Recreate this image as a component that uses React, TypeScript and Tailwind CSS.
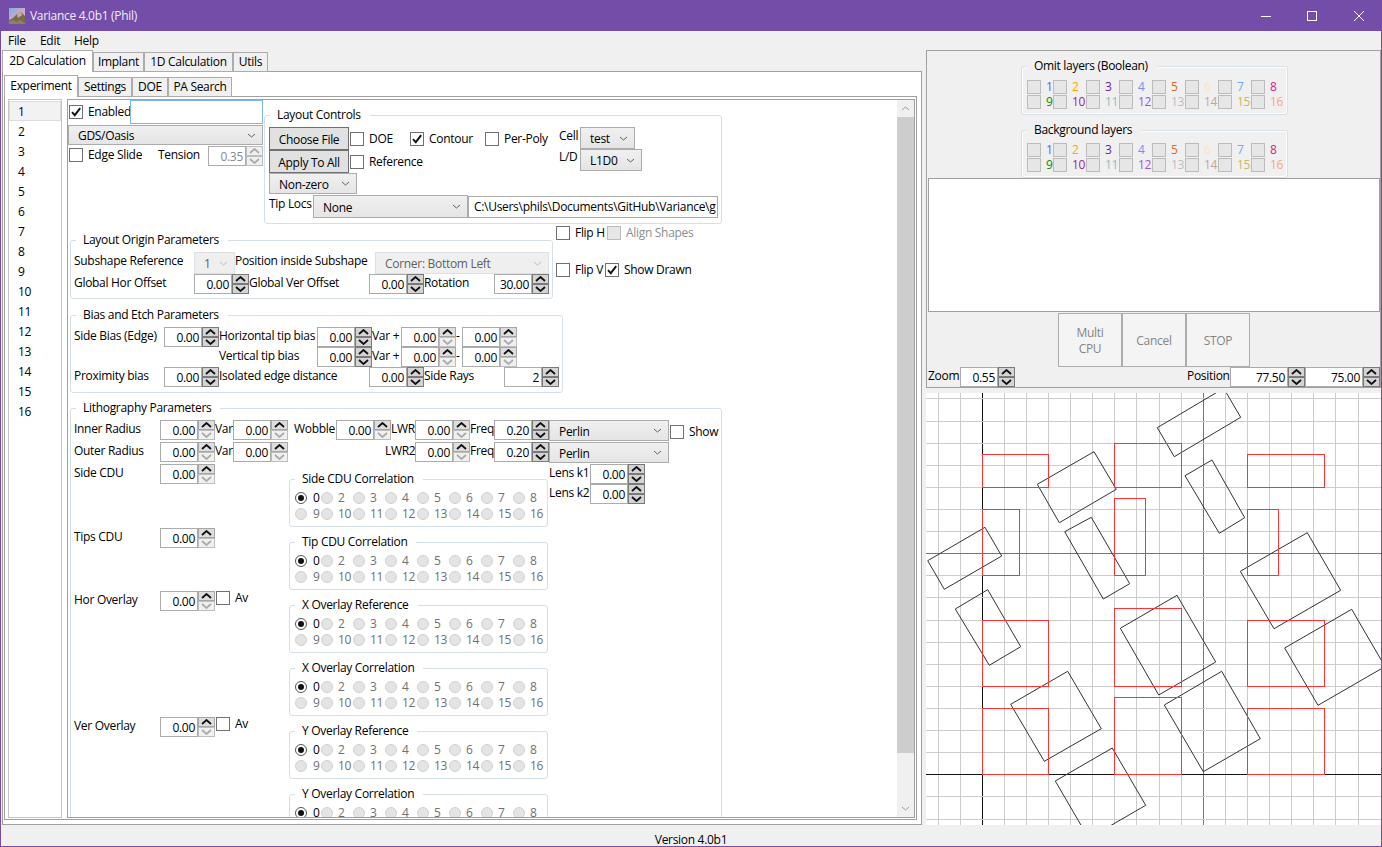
import React from "react";

type Mode = "on" | "half" | "off";

function Arrow({ up, on, strong }: { up?: boolean; on: boolean; strong: boolean }) {
  return (
    <div className={`flex-1 flex items-center justify-center border ${on ? (strong ? "bg-[#d4d4d4] border-[#7a7a7a]" : "bg-[#dedede] border-[#a6a6a6]") : "bg-[#f0f0f0] border-[#bdbdbd]"}`}>
      <svg width="11" height="6" viewBox="0 0 11 6">
        <path d={up ? "M1 5 L5.5 1 L10 5" : "M1 1 L5.5 5 L10 1"} fill="none" stroke={on ? "#111" : "#ababab"} strokeWidth="1.8" />
      </svg>
    </div>
  );
}

function Spin({ v, w = "w-[55px]", mode = "on" }: { v: string; w?: string; mode?: Mode }) {
  return (
    <div className={`flex h-[20px] shrink-0 ${w}`}>
      <div className={`flex-1 min-w-0 bg-white border border-[#ababab] flex items-center justify-end pr-[2px] pt-[2px] ${mode === "off" ? "text-[#8a8a8a]" : "text-black"}`}>{v}</div>
      <div className="w-[17px] flex flex-col">
        <Arrow up on={mode !== "off"} strong={mode === "on"} />
        <Arrow on={mode === "on"} strong={mode === "on"} />
      </div>
    </div>
  );
}

function Chevron({ pale }: { pale?: boolean }) {
  return (
    <svg width="9" height="5" viewBox="0 0 9 5" className="shrink-0">
      <path d="M1 1 L4.5 4 L8 1" fill="none" stroke={pale ? "#bdbdbd" : "#606060"} strokeWidth="1" />
    </svg>
  );
}

function Drop({ t, w, h = "h-[20px]", off }: { t: string; w: string; h?: string; off?: boolean }) {
  return (
    <div className={`flex items-center justify-between shrink-0 pl-[9px] pr-[6px] border ${w} ${h} ${off ? "bg-[#efefef] border-[#e0e0e0] text-[#5f5f5f]" : "bg-gradient-to-b from-[#f0f0f0] to-[#e5e5e5] border-[#acacac]"}`}>
      <span className="pt-[2px]">{t}</span>
      <Chevron pale={off} />
    </div>
  );
}

function Box({ checked, off }: { checked?: boolean; off?: boolean }) {
  return (
    <div className={`w-[14px] h-[14px] shrink-0 border flex items-center justify-center ${off ? "bg-[#e6e6e6] border-[#bcbcbc]" : "bg-white border-[#707070]"}`}>
      {checked && (
        <svg width="12" height="12" viewBox="0 0 12 12">
          <path d="M2 6.2 L4.8 9.2 L10.2 2.2" fill="none" stroke="#111" strokeWidth="1.9" />
        </svg>
      )}
    </div>
  );
}

function Check({ t, w, checked, off, cls = "" }: { t: string; w?: string; checked?: boolean; off?: boolean; cls?: string }) {
  return (
    <div className={`flex items-center shrink-0 ${w ?? ""} ${cls}`}>
      <Box checked={checked} off={off} />
      <span className={`ml-[5px] whitespace-nowrap ${off ? "text-[#8c8c8c]" : ""}`}>{t}</span>
    </div>
  );
}

function L({ t, w, cls = "" }: { t: string; w: string; cls?: string }) {
  return <div className={`shrink-0 pt-[1px] leading-[16px] whitespace-nowrap ${w} ${cls}`}>{t}</div>;
}

function Group({ title, cls, bg = "bg-white", children }: { title: string; cls: string; bg?: string; children: React.ReactNode }) {
  return (
    <div className={`relative shrink-0 border border-[#d5dfe5] rounded-[3px] ${cls}`}>
      <div className={`absolute -top-[9px] left-[5px] h-[16px] leading-[16px] pl-[7px] pr-[9px] whitespace-nowrap ${bg}`}>{title}</div>
      {children}
    </div>
  );
}

function Radio({ sel }: { sel?: boolean }) {
  return sel ? (
    <div className="w-[12px] h-[12px] rounded-full bg-white border border-[#555] flex items-center justify-center shrink-0">
      <div className="w-[6px] h-[6px] rounded-full bg-[#111]" />
    </div>
  ) : (
    <div className="w-[12px] h-[12px] rounded-full bg-[#e4e4e4] border border-[#d0d0d0] shrink-0" />
  );
}

const nums = Array.from({ length: 16 }, (_, i) => i + 1);

function RadioGroup({ title }: { title: string }) {
  return (
    <Group title={title} cls="w-[259px] h-[48px] mb-[15px] pl-[5px] pt-[10px]">
      <div className="grid grid-cols-[26px_repeat(7,32px)] auto-rows-[16px]">
        {nums.map((n, i) => (
          <div key={n} className="flex items-center">
            <Radio sel={i === 0} />
            <span className={`${i % 8 === 0 ? "ml-[6px]" : "ml-[5px]"} ${i === 0 ? "text-black" : "text-[#707070]"}`}>{i === 0 ? "0" : n}</span>
          </div>
        ))}
      </div>
    </Group>
  );
}

const layerColors = [
  "text-[#5a5aff]", "text-[#ffa500]", "text-[#6a1b9a]", "text-[#7b8cf5]", "text-[#e0691e]", "text-[#ffe4b5]", "text-[#6fa8f5]", "text-[#d81b8a]",
  "text-[#0a8a0a]", "text-[#a020a0]", "text-[#8fb8c8]", "text-[#a050f0]", "text-[#bdbdbd]", "text-[#c8a0a0]", "text-[#c8b860]", "text-[#f8a878]",
];

function LayerGrid() {
  return (
    <div className="grid grid-cols-[26px_repeat(7,33px)] auto-rows-[15px]">
      {nums.map((n, i) => (
        <div key={n} className="flex items-start">
          <Box off />
          <span className={`ml-[5px] -mt-px ${layerColors[i]}`}>{n}</span>
        </div>
      ))}
    </div>
  );
}

function Tab({ t, w, active }: { t: string; w: string; active?: boolean }) {
  return (
    <div className={`flex justify-center shrink-0 border-x border-t border-[#acacac] ${w} ${active ? "h-[22px] bg-white pt-[2px] text-black relative z-10" : "h-[20px] bg-[#f0f0f0] pt-[1px] border-b"}`}>
      {t}
    </div>
  );
}

const gx = [938, 960, 982, 1004, 1026, 1048, 1070, 1092, 1114, 1136, 1159, 1181, 1203, 1225, 1247, 1269, 1291, 1313, 1335, 1358];
const gy = [398, 421, 443, 465, 487, 509, 531, 553, 575, 597, 620, 642, 664, 686, 708, 730, 752, 774, 796, 819];
const reds: number[][] = [
  [982, 454, 1048, 487], [1114, 443, 1181, 487], [1247, 454, 1324, 487],
  [982, 509, 1019, 575], [1114, 498, 1145, 575], [1247, 509, 1278, 575],
  [982, 620, 1048, 686], [1114, 608, 1181, 686], [1247, 620, 1324, 686],
  [982, 708, 1048, 774], [1114, 697, 1181, 774], [1247, 708, 1324, 774],
];
const polys = [
  "1157.3,427.7 1174.3,456.7 1240.7,417.3 1223.7,388.3",
  "1037.3,484.3 1059.3,522.7 1116.3,489.3 1094,451.7",
  "1185,475.7 1212,460 1244.7,517.7 1219.3,533.3",
  "1064.7,531.7 1091.3,517.3 1129.7,583.7 1103.3,599",
  "927.7,560.7 944.3,589.3 1001.7,556 985,527.3",
  "955.3,609 987.7,589.7 1020.7,646.7 989.3,665.3",
  "1240.3,571.3 1307.3,532.7 1340.7,590.3 1274,628.7",
  "1120.3,628.3 1177,595.3 1215.7,662 1158.7,695",
  "1284.7,648 1351.7,609.3 1385,666.6 1318,705.3",
  "1010.7,704.3 1067.7,671.3 1101.3,728.7 1044.3,761.3",
  "1164.3,705 1221.7,671.3 1260.3,738.7 1203.3,771.7",
  "1055.3,781 1112.3,748 1145.7,805.3 1088.7,838.3",
];

function Canvas() {
  return (
    <svg width="455" height="432" viewBox="926 393 455 432" className="block bg-white">
      {gx.map((x) => (
        <line key={x} x1={x + 0.5} x2={x + 0.5} y1="393" y2="825" stroke={x === 982 ? "#111" : x === 1203 ? "#6f7780" : "#cccccc"} />
      ))}
      {gy.map((y) => (
        <line key={y} y1={y + 0.5} y2={y + 0.5} x1="926" x2="1382" stroke={y === 774 ? "#111" : y === 553 ? "#6f7780" : "#cccccc"} />
      ))}
      {polys.map((p) => (
        <polygon key={p} points={p} fill="none" stroke="#333" strokeWidth="1" />
      ))}
      {reds.map((r) => (
        <rect key={r.join()} x={r[0] + 0.5} y={r[1] + 0.5} width={r[2] - r[0]} height={r[3] - r[1]} fill="none" stroke="#ff3333" />
      ))}
    </svg>
  );
}

function TitleIcon() {
  return (
    <svg width="16" height="16" viewBox="0 0 16 16" className="shrink-0">
      <defs>
        <linearGradient id="sky" x1="0" y1="0" x2="1" y2="1">
          <stop offset="0" stopColor="#7fb0d8" />
          <stop offset="0.6" stopColor="#d8a8c8" />
          <stop offset="1" stopColor="#e8c8c0" />
        </linearGradient>
      </defs>
      <rect width="16" height="16" fill="url(#sky)" />
      <path d="M0 16 V12 L4 10 L8 6 L12 4 L16 8 V16 Z" fill="#7a6a50" />
      <path d="M0 16 V13 L4 12 L8 14 L11 12 L16 15 V16 Z" fill="#8f8258" />
      <path d="M8 6 L12 4 L13 7 L9 10 Z" fill="#c8b0a0" />
    </svg>
  );
}

export default function App() {
  return (
    <div className="w-[1382px] h-[847px] overflow-hidden bg-[#f0f0f0] border-x border-b border-[#744da9] flex flex-col text-[12px] leading-[16px] text-black font-['Open_Sans',sans-serif] tracking-[-0.3px]">
      {/* title bar */}
      <div className="h-[31px] shrink-0 -mx-px bg-[#744da9] flex items-center pl-[9px] text-[#f1ecf7]">
        <TitleIcon />
        <span className="ml-[5px]">Variance 4.0b1 (Phil)</span>
        <div className="flex-1" />
        <div className="w-[46px] flex justify-center">
          <svg width="10" height="10" viewBox="0 0 10 10"><path d="M0 5.5 H10" stroke="#fff" /></svg>
        </div>
        <div className="w-[46px] flex justify-center">
          <svg width="10" height="10" viewBox="0 0 10 10"><rect x="0.5" y="0.5" width="9" height="9" fill="none" stroke="#fff" /></svg>
        </div>
        <div className="w-[47px] flex justify-center">
          <svg width="10" height="10" viewBox="0 0 10 10"><path d="M0 0 L10 10 M10 0 L0 10" stroke="#fff" /></svg>
        </div>
      </div>
      {/* menu */}
      <div className="h-[19px] shrink-0 flex items-center pl-[7px] pt-[1px]">
        <span className="w-[32px]">File</span>
        <span className="w-[34px]">Edit</span>
        <span>Help</span>
      </div>
      {/* main */}
      <div className="flex flex-1 min-h-0">
        {/* left */}
        <div className="w-[920px] ml-[1px] shrink-0 flex flex-col h-[775px]">
          <div className="flex items-end h-[22px] -mb-px relative z-10 shrink-0">
            <Tab t="2D Calculation" w="w-[91px]" active />
            <Tab t="Implant" w="w-[51px]" />
            <Tab t="1D Calculation" w="w-[89px]" />
            <Tab t="Utils" w="w-[35px]" />
          </div>
          <div className="flex-1 min-h-0 bg-white border border-[#a0a0a0] pt-[3px] pl-[1px]">
            <div className="flex items-end h-[22px] -mb-px relative z-10">
              <Tab t="Experiment" w="w-[74px]" active />
              <Tab t="Settings" w="w-[54px]" />
              <Tab t="DOE" w="w-[36px]" />
              <Tab t="PA Search" w="w-[64px]" />
            </div>
            <div className="w-[913px] h-[724px] border border-[#a0a0a0] flex pl-[3px] pt-[2px]">
              {/* list */}
              <div className="w-[54px] h-[719px] border border-[#c4c4c4] pt-[1px] shrink-0">
                {nums.map((n) => (
                  <div key={n} className={`h-[20px] flex items-center pl-[8px] pt-[2px] ${n === 1 ? "bg-[#f2f2f2] border border-[#dcdcdc]" : "border border-transparent"}`}>{n}</div>
                ))}
              </div>
              {/* form */}
              <div className="ml-[5px] w-[848px] h-[719px] border border-[#a0a0a0] flex overflow-hidden shrink-0">
                <div className="w-[829px] h-full overflow-hidden shrink-0 flex flex-col">
                  {/* block A */}
                  <div className="flex h-[124px] shrink-0">
                    <div className="w-[196px] shrink-0">
                      <div className="flex items-center h-[24px] pl-[1px]">
                        <Box checked />
                        <span className="ml-[5px] w-[42px] shrink-0">Enabled</span>
                        <div className="w-[133px] h-[24px] bg-white border border-[#7eb4ea]" />
                      </div>
                      <div className="mt-[1px]"><Drop t="GDS/Oasis" w="w-[195px]" /></div>
                      <div className="flex items-start h-[20px] mt-[1px] pl-[1px]">
                        <div className="w-[89px] mt-[1px] shrink-0"><Check t="Edge Slide" /></div>
                        <L t="Tension" w="w-[50px]" />
                        <Spin v="0.35" mode="off" w="w-[55px]" />
                      </div>
                    </div>
                    <Group title="Layout Controls" cls="w-[458px] h-[109px] mt-[15px] pl-[4px] pt-[11px]">
                      <div className="flex h-[68px]">
                        <div className="w-[81px] shrink-0">
                          <div className="w-[80px] h-[23px] bg-[#e1e1e1] border border-[#707070] flex items-center justify-center pt-[2px]">Choose File</div>
                          <div className="w-[80px] h-[23px] bg-[#e1e1e1] border border-[#707070] flex items-center justify-center pt-[2px]">Apply To All</div>
                          <Drop t="Non-zero" w="w-[88px]" h="h-[21px]" />
                        </div>
                        <div className="w-[209px] shrink-0">
                          <div className="flex h-[23px] items-center">
                            <Check t="DOE" w="w-[60px]" />
                            <Check t="Contour" w="w-[75px]" checked />
                            <Check t="Per-Poly" w="w-[74px]" />
                          </div>
                          <div className="flex h-[23px] items-center">
                            <Check t="Reference" />
                          </div>
                        </div>
                        <div>
                          <div className="flex h-[22px]"><L t="Cell" w="w-[21px]" /><Drop t="test" w="w-[55px]" h="h-[22px]" /></div>
                          <div className="flex h-[22px]"><L t="L/D" w="w-[21px]" cls="-mt-px" /><Drop t="L1D0" w="w-[62px]" h="h-[22px]" /></div>
                        </div>
                      </div>
                      <div className="flex">
                        <L t="Tip Locs" w="w-[44px]" />
                        <Drop t="None" w="w-[155px]" h="h-[23px]" />
                        <div className="w-[250px] h-[22px] mt-[1px] bg-white border border-[#ababab] flex items-center pl-[5px] overflow-hidden whitespace-nowrap">C:\Users\phils\Documents\GitHub\Variance\g</div>
                      </div>
                    </Group>
                  </div>
                  {/* block B */}
                  <div className="flex h-[16px] shrink-0 pl-[488px] pt-[2px]">
                    <Check t="Flip H" w="w-[51px] h-[14px]" />
                    <Check t="Align Shapes" off cls="h-[14px]" />
                  </div>
                  {/* block C */}
                  <div className="flex h-[75px] shrink-0">
                    <Group title="Layout Origin Parameters" cls="ml-[2px] w-[483px] h-[59px] pl-[3px] pt-[11px]">
                      <div className="flex h-[22px]">
                        <L t="Subshape Reference" w="w-[120px]" />
                        <Drop t="1" w="w-[41px]" h="h-[22px]" off />
                        <L t="Position inside Subshape" w="w-[140px]" />
                        <Drop t="Corner: Bottom Left" w="w-[174px]" h="h-[22px]" off />
                      </div>
                      <div className="flex h-[20px]">
                        <L t="Global Hor Offset" w="w-[120px]" />
                        <Spin v="0.00" />
                        <L t="Global Ver Offset" w="w-[120px]" />
                        <Spin v="0.00" />
                        <L t="Rotation" w="w-[70px]" />
                        <Spin v="30.00" />
                      </div>
                    </Group>
                    <div className="flex ml-[3px] mt-[23px] h-[14px]">
                      <Check t="Flip V" w="w-[49px]" />
                      <Check t="Show Drawn" checked />
                    </div>
                  </div>
                  {/* bias */}
                  <Group title="Bias and Etch Parameters" cls="ml-[2px] w-[493px] h-[78px] pl-[3px] pt-[11px]">
                    <div className="flex h-[20px]">
                      <L t="Side Bias (Edge)" w="w-[90px]" />
                      <Spin v="0.00" />
                      <L t="Horizontal tip bias" w="w-[98px]" />
                      <Spin v="0.00" />
                      <L t="Var +" w="w-[29px]" />
                      <Spin v="0.00" mode="half" />
                      <L t="-" w="w-[6px]" />
                      <Spin v="0.00" mode="half" />
                    </div>
                    <div className="flex h-[20px]">
                      <div className="w-[145px] shrink-0" />
                      <L t="Vertical tip bias" w="w-[98px]" />
                      <Spin v="0.00" />
                      <L t="Var +" w="w-[29px]" />
                      <Spin v="0.00" mode="half" />
                      <L t="-" w="w-[6px]" />
                      <Spin v="0.00" mode="half" />
                    </div>
                    <div className="flex h-[20px]">
                      <L t="Proximity bias" w="w-[90px]" />
                      <Spin v="0.00" />
                      <L t="Isolated edge distance" w="w-[150px]" />
                      <Spin v="0.00" />
                      <L t="Side Rays" w="w-[80px]" />
                      <Spin v="2" />
                    </div>
                  </Group>
                  {/* litho */}
                  <Group title="Lithography Parameters" cls="ml-[2px] mt-[15px] w-[652px] h-[450px] pl-[3px] pt-[11px]">
                    <div className="flex h-[22px]">
                      <L t="Inner Radius" w="w-[86px]" />
                      <Spin v="0.00" mode="half" />
                      <L t="Var" w="w-[18px]" />
                      <Spin v="0.00" mode="half" />
                      <L t="Wobble" w="w-[42px]" cls="ml-[6px]" />
                      <Spin v="0.00" mode="half" />
                      <L t="LWR" w="w-[24px]" />
                      <Spin v="0.00" mode="half" />
                      <L t="Freq" w="w-[24px]" />
                      <Spin v="0.20" />
                      <Drop t="Perlin" w="w-[120px]" h="h-[21px]" />
                      <Check t="Show" cls="ml-[1px] h-[21px] mt-[1px]" />
                    </div>
                    <div className="flex h-[22px]">
                      <L t="Outer Radius" w="w-[86px]" />
                      <Spin v="0.00" mode="half" />
                      <L t="Var" w="w-[18px]" />
                      <Spin v="0.00" mode="half" />
                      <L t="LWR2" w="w-[30px]" cls="ml-[97px]" />
                      <Spin v="0.00" mode="half" />
                      <L t="Freq" w="w-[24px]" />
                      <Spin v="0.20" />
                      <Drop t="Perlin" w="w-[120px]" h="h-[21px]" />
                    </div>
                    <div className="flex">
                      <div className="w-[215px] shrink-0">
                        <div className="flex h-[20px]">
                          <L t="Side CDU" w="w-[86px]" />
                          <Spin v="0.00" mode="half" />
                        </div>
                        <div className="flex h-[20px] mt-[44px]">
                          <L t="Tips CDU" w="w-[86px]" />
                          <Spin v="0.00" mode="half" />
                        </div>
                        <div className="flex h-[20px] mt-[43px]">
                          <L t="Hor Overlay" w="w-[86px]" />
                          <Spin v="0.00" mode="half" />
                          <Check t="Av" cls="ml-[1px] h-[14px]" />
                        </div>
                        <div className="flex h-[20px] mt-[106px]">
                          <L t="Ver Overlay" w="w-[86px]" />
                          <Spin v="0.00" mode="half" />
                          <Check t="Av" cls="ml-[1px] h-[14px]" />
                        </div>
                      </div>
                      <div className="w-[260px] shrink-0 pt-[15px]">
                        <RadioGroup title="Side CDU Correlation" />
                        <RadioGroup title="Tip CDU Correlation" />
                        <RadioGroup title="X Overlay Reference" />
                        <RadioGroup title="X Overlay Correlation" />
                        <RadioGroup title="Y Overlay Reference" />
                        <RadioGroup title="Y Overlay Correlation" />
                      </div>
                      <div>
                        <div className="flex h-[20px]"><L t="Lens k1" w="w-[41px]" /><Spin v="0.00" /></div>
                        <div className="flex h-[20px]"><L t="Lens k2" w="w-[41px]" /><Spin v="0.00" /></div>
                      </div>
                    </div>
                  </Group>
                </div>
                {/* scrollbar */}
                <div className="w-[17px] h-full bg-[#f0f0f0] flex flex-col shrink-0">
                  <div className="h-[17px] flex items-center justify-center shrink-0">
                    <svg width="9" height="5" viewBox="0 0 9 5"><path d="M1 4 L4.5 1 L8 4" fill="none" stroke="#9a9a9a" /></svg>
                  </div>
                  <div className="h-[636px] bg-[#cdcdcd] shrink-0" />
                  <div className="flex-1" />
                  <div className="h-[17px] flex items-center justify-center shrink-0">
                    <svg width="9" height="5" viewBox="0 0 9 5"><path d="M1 1 L4.5 4 L8 1" fill="none" stroke="#9a9a9a" /></svg>
                  </div>
                </div>
              </div>
            </div>
          </div>
        </div>
        {/* right */}
        <div className="ml-[4px] w-[455px] shrink-0 flex flex-col">
          <div className="h-[338px] border border-[#a0a0a0] pt-[15px] shrink-0">
            <Group title="Omit layers (Boolean)" bg="bg-[#f0f0f0]" cls="ml-[94px] w-[267px] h-[49px] pl-[5px] pt-[13px] shadow-[inset_0_0_0_1px_#fff]">
              <LayerGrid />
            </Group>
            <Group title="Background layers" bg="bg-[#f0f0f0]" cls="ml-[94px] mt-[15px] w-[267px] h-[48px] pl-[5px] pt-[12px] shadow-[inset_0_0_0_1px_#fff]">
              <LayerGrid />
            </Group>
            <div className="ml-[1px] w-[452px] h-[134px] bg-white border border-[#a0a0a0]" />
            <div className="flex ml-[131px] mt-[1px] h-[54px] text-[#858585]">
              <div className="w-[64px] bg-[#f4f4f4] border border-[#adadad] flex items-center justify-center text-center leading-[16px] pt-[2px]">Multi<br />CPU</div>
              <div className="w-[64px] bg-[#f4f4f4] border border-[#adadad] flex items-center justify-center pt-[2px]">Cancel</div>
              <div className="w-[64px] bg-[#f4f4f4] border border-[#adadad] flex items-center justify-center pt-[2px]">STOP</div>
            </div>
            <div className="flex h-[20px] pl-[1px]">
              <L t="Zoom" w="w-[32px]" />
              <Spin v="0.55" />
              <div className="flex-1" />
              <L t="Position" w="w-[43px]" />
              <Spin v="77.50" w="w-[75px]" />
              <Spin v="75.00" w="w-[75px]" />
            </div>
          </div>
          <div className="mt-[5px] h-[432px] shrink-0">
            <Canvas />
          </div>
        </div>
      </div>
      {/* status */}
      <div className="h-[21px] shrink-0 flex justify-center pt-[7px]">Version 4.0b1</div>
    </div>
  );
}
